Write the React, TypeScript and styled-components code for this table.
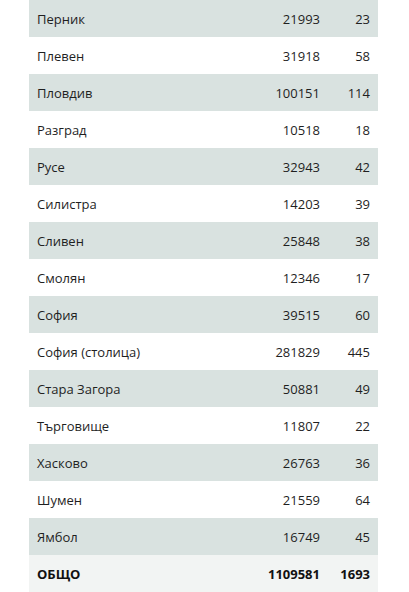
import React from "react";
import styled, { createGlobalStyle } from "styled-components";

type Row = { name: string; population: number; count: number };

const rows: Row[] = [
  { name: "Перник", population: 21993, count: 23 },
  { name: "Плевен", population: 31918, count: 58 },
  { name: "Пловдив", population: 100151, count: 114 },
  { name: "Разград", population: 10518, count: 18 },
  { name: "Русе", population: 32943, count: 42 },
  { name: "Силистра", population: 14203, count: 39 },
  { name: "Сливен", population: 25848, count: 38 },
  { name: "Смолян", population: 12346, count: 17 },
  { name: "София", population: 39515, count: 60 },
  { name: "София (столица)", population: 281829, count: 445 },
  { name: "Стара Загора", population: 50881, count: 49 },
  { name: "Търговище", population: 11807, count: 22 },
  { name: "Хасково", population: 26763, count: 36 },
  { name: "Шумен", population: 21559, count: 64 },
  { name: "Ямбол", population: 16749, count: 45 },
];

const GlobalStyle = createGlobalStyle`
  body {
    margin: 0;
    background: #ffffff;
    font-family: "Open Sans", "Noto Sans", sans-serif;
  }
`;

const App = () => {
  return (
    <>
      <GlobalStyle />
      <Wrapper>
        <Table>
          <colgroup>
            <col />
            <col style={{ width: 100 }} />
            <col style={{ width: 50 }} />
          </colgroup>
          <tbody>
            {rows.map((item, key) => (
              <TableRow key={key} striped={key % 2 === 0}>
                <NameCell>{item.name}</NameCell>
                <NumCell>{item.population}</NumCell>
                <NumCell>{item.count}</NumCell>
              </TableRow>
            ))}
            <TotalRow>
              <NameCell>ОБЩО</NameCell>
              <NumCell>1109581</NumCell>
              <NumCell>1693</NumCell>
            </TotalRow>
          </tbody>
        </Table>
      </Wrapper>
    </>
  );
};

export default App;

const Wrapper = styled.div`
  padding-left: 29px;
`;

const Table = styled.table`
  width: 349px;
  border-collapse: collapse;
  table-layout: fixed;
  font-size: 13px;
  color: #1f1f1f;
`;

const TableRow = styled.tr<{ striped: boolean }>`
  height: 37px;
  background-color: ${(p) => (p.striped ? "#d9e2e0" : "#ffffff")};
`;

const TotalRow = styled.tr`
  height: 37px;
  background-color: #f2f4f3;
  font-weight: 700;
  color: #111;
`;

const NameCell = styled.td`
  padding: 0 8px;
  text-align: left;
  white-space: nowrap;
`;

const NumCell = styled.td`
  padding: 0 8px 0 0;
  text-align: right;
  white-space: nowrap;
`;
